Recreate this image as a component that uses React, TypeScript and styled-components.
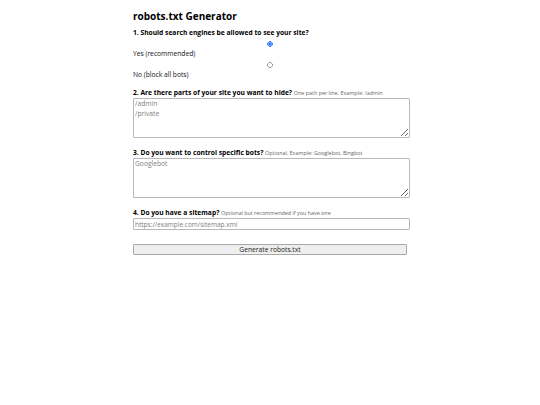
import React from 'react';
import styled, { createGlobalStyle } from 'styled-components';

const GlobalStyle = createGlobalStyle`
  html, body {
    margin: 0;
    padding: 0;
    background: #ffffff;
  }
  body {
    font-family: "Open Sans", "Noto Sans", sans-serif;
    color: #111111;
  }
`;

const Page = styled.main`
  max-width: 274px;
  margin: 0 auto;
  padding-top: 9px;
`;

const Title = styled.h1`
  font-size: 10px;
  line-height: 14px;
  font-weight: 700;
  margin: 0 0 6px;
  color: #000000;
`;

const Section = styled.section<{ $gap?: number }>`
  margin-bottom: ${(p) => p.$gap ?? 11}px;
`;

const Question = styled.div`
  font-size: 6.7px;
  line-height: 8px;
  font-weight: 700;
  margin-bottom: 1px;
  color: #000000;
`;

const Hint = styled.span`
  font-size: 5.4px;
  font-weight: 400;
  color: #666666;
`;

const Option = styled.label`
  display: block;
  font-size: 6.7px;
  line-height: 8px;
`;

/* the radio stretches to the full row, so its circle sits in the middle */
const Radio = styled.input`
  display: block;
  appearance: none;
  width: 100%;
  height: 6px;
  margin: 4px 0 3px;
  background: radial-gradient(
    circle 3px at 50% 50%,
    transparent 1.9px,
    #9a9a9a 2.2px,
    #9a9a9a 2.6px,
    transparent 3px
  );

  &:checked {
    background: radial-gradient(
      circle 3px at 50% 50%,
      #2f7cf0 1.3px,
      #a9c8f7 1.8px,
      #3d86f2 2.3px,
      #3d86f2 2.6px,
      transparent 3px
    );
  }
`;

const Area = styled.textarea`
  display: block;
  box-sizing: content-box;
  width: 100%;
  height: 38px;
  margin: 0;
  padding: 0 0 0 1px;
  border: 1px solid #b8b8b8;
  border-radius: 1px;
  font-family: "Open Sans", "Noto Sans", sans-serif;
  font-size: 6.7px;
  line-height: 10px;
  color: #111111;
  resize: vertical;

  &::placeholder {
    color: #808080;
  }
`;

const Field = styled.input`
  display: block;
  box-sizing: content-box;
  width: 100%;
  height: 10px;
  margin: 0;
  padding: 0 0 0 1px;
  border: 1px solid #b8b8b8;
  border-radius: 1px;
  font-family: "Open Sans", "Noto Sans", sans-serif;
  font-size: 6.5px;
  color: #111111;

  &::placeholder {
    color: #808080;
  }
`;

const Submit = styled.button`
  display: block;
  box-sizing: border-box;
  width: 100%;
  height: 11px;
  margin-top: 14px;
  padding: 0;
  border: 1px solid #a9a9a9;
  border-radius: 1px;
  background: #efefef;
  font-family: "Open Sans", "Noto Sans", sans-serif;
  font-size: 6.7px;
  line-height: 9px;
  color: #222222;
`;

const App = () => {
  return (
    <>
      <GlobalStyle />
      <Page>
        <Title>robots.txt Generator</Title>
        <Section $gap={10}>
          <Question>1. Should search engines be allowed to see your site?</Question>
          <Option>
            <Radio type="radio" name="allow" defaultChecked />
            Yes (recommended)
          </Option>
          <Option>
            <Radio type="radio" name="allow" />
            No (block all bots)
          </Option>
        </Section>
        <Section>
          <Question>
            2. Are there parts of your site you want to hide? <Hint>One path per line. Example: /admin</Hint>
          </Question>
          <Area placeholder={'/admin\n/private'} />
        </Section>
        <Section>
          <Question>
            3. Do you want to control specific bots? <Hint>Optional. Example: Googlebot, Bingbot</Hint>
          </Question>
          <Area placeholder="Googlebot" />
        </Section>
        <Section $gap={0}>
          <Question>
            4. Do you have a sitemap? <Hint>Optional but recommended if you have one</Hint>
          </Question>
          <Field type="text" placeholder="https://example.com/sitemap.xml" />
        </Section>
        <Submit type="button">Generate robots.txt</Submit>
      </Page>
    </>
  );
};

export default App;
